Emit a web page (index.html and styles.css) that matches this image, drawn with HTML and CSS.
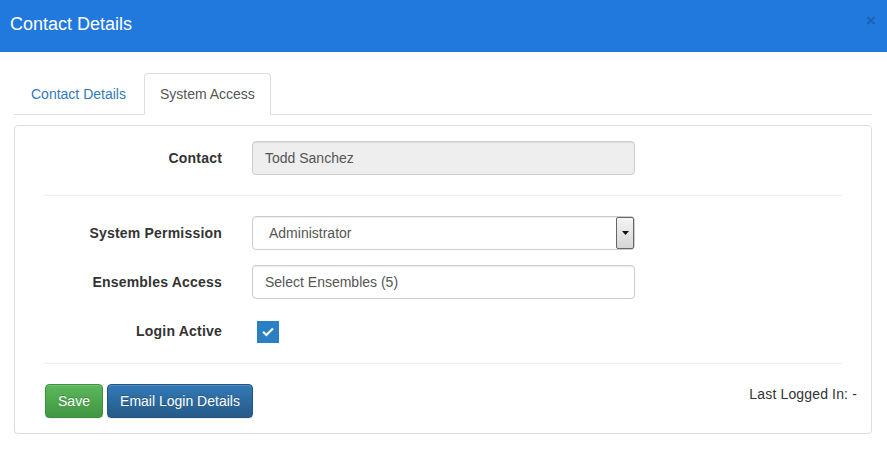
FILE: index.html
```
<!DOCTYPE html>
<html>
<head>
<meta charset="utf-8">
<link rel="stylesheet" href="styles.css">
</head>
<body>
<div class="header">
  <h4 class="title">Contact Details</h4>
  <span class="close">×</span>
</div>
<div class="content">
  <ul class="tabs">
    <li class="tab"><a>Contact Details</a></li>
    <li class="tab active"><a>System Access</a></li>
  </ul>
  <div class="panel">
    <div class="row">
      <label class="lbl">Contact</label>
      <div class="field disabled">Todd Sanchez</div>
    </div>
    <div class="rule first"></div>
    <div class="row mb15">
      <label class="lbl">System Permission</label>
      <div class="field select"><span class="sel-text">Administrator</span><span class="arrow"><svg width="7" height="4" viewBox="0 0 7 4"><path d="M0 0H7L3.5 4Z" fill="#111"/></svg></span></div>
    </div>
    <div class="row mb15">
      <label class="lbl">Ensembles Access</label>
      <div class="field">Select Ensembles (5)</div>
    </div>
    <div class="row mb15">
      <label class="lbl">Login Active</label>
      <div class="check"><svg width="12" height="10" viewBox="0 0 12 10"><path d="M1 4.8L4.4 8L11 1.5" fill="none" stroke="#fff" stroke-width="2.2"/></svg></div>
    </div>
    <div class="rule"></div>
    <div class="footer">
      <div class="btns">
        <button class="btn save">Save</button>
        <button class="btn email">Email Login Details</button>
      </div>
      <div class="last">Last Logged In: -</div>
    </div>
  </div>
</div>
</body>
</html>
```
FILE: styles.css
```
* { box-sizing: border-box; }
body {
  margin: 0;
  font-family: "Liberation Sans", Arial, sans-serif;
  font-size: 14px;
  color: #333;
  background: #fff;
}
.header {
  height: 52px;
  background: #2279dd;
  display: flex;
  justify-content: space-between;
  align-items: flex-start;
  padding: 0 11px 0 10px;
}
.title {
  margin: 0;
  padding-top: 14px;
  font-size: 18px;
  font-weight: normal;
  color: #fff;
  line-height: 20px;
}
.close {
  margin-top: 11px;
  font-size: 17px;
  font-weight: bold;
  color: #1a4f94;
  opacity: 0.6;
  line-height: 20px;
}
.content {
  padding: 21px 15px 0 14px;
}
.tabs {
  list-style: none;
  margin: 0;
  padding: 0 0 0 1px;
  display: flex;
  border-bottom: 1px solid #ddd;
  height: 42px;
}
.tab {
  margin-right: 2px;
  margin-bottom: -1px;
}
.tab a {
  display: block;
  padding: 10px 15px;
  line-height: 20px;
  border: 1px solid transparent;
  border-radius: 4px 4px 0 0;
  color: #337ab7;
}
.tab.active a {
  color: #555;
  background: #fff;
  border-color: #ddd #ddd transparent #ddd;
}
.panel {
  margin-top: 10px;
  border: 1px solid #ddd;
  border-radius: 4px;
  box-shadow: 0 1px 1px rgba(0,0,0,0.05);
  padding: 15px 29px 15px 29px;
}
.row {
  display: flex;
  align-items: center;
  height: 34px;
}
.mb15 { margin-bottom: 15px; }
.lbl {
  width: 178px;
  text-align: right;
  font-weight: bold;
  letter-spacing: 0.2px;
  margin-right: 30px;
}
.field {
  width: 383px;
  height: 34px;
  border: 1px solid #ccc;
  border-radius: 4px;
  padding: 6px 12px;
  line-height: 20px;
  color: #555;
  background: #fff;
  box-shadow: inset 0 1px 1px rgba(0,0,0,0.075);
}
.field.disabled {
  background: #eee;
}
.field.select {
  display: flex;
  align-items: center;
  justify-content: space-between;
  padding: 0 0 0 16px;
}
.arrow {
  width: 18px;
  height: 32px;
  border: 1px solid #666;
  border-radius: 2px;
  background: linear-gradient(#f4f4f4, #d6d6d6);
  display: flex;
  align-items: center;
  justify-content: center;
}
.check {
  width: 22px;
  height: 22px;
  margin-left: 5px;
  margin-top: 1px;
  background: #2a80c2;
  display: flex;
  align-items: center;
  justify-content: center;
}
.rule {
  height: 1px;
  background: #eee;
  margin-bottom: 20px;
}
.rule.first { margin-top: 20px; }
.footer {
  display: flex;
  justify-content: space-between;
  align-items: flex-start;
  margin-right: -15px;
}
.btns {
  display: flex;
  gap: 4px;
  margin-left: 1px;
}
.btn {
  font-family: "Liberation Sans", Arial, sans-serif;
  font-size: 14px;
  line-height: 20px;
  height: 34px;
  padding: 6px 12px;
  border-radius: 4px;
  color: #fff;
  text-shadow: 0 -1px 0 rgba(0,0,0,0.2);
  box-shadow: inset 0 1px 0 rgba(255,255,255,0.15), 0 1px 1px rgba(0,0,0,0.075);
}
.save {
  width: 58px;
  background: linear-gradient(#5cb85c, #419641);
  border: 1px solid #3e8f3e;
}
.email {
  width: 146px;
  background: linear-gradient(#337ab7, #265a88);
  border: 1px solid #245580;
}
.last {
  line-height: 20px;
  letter-spacing: 0.15px;
}
```
